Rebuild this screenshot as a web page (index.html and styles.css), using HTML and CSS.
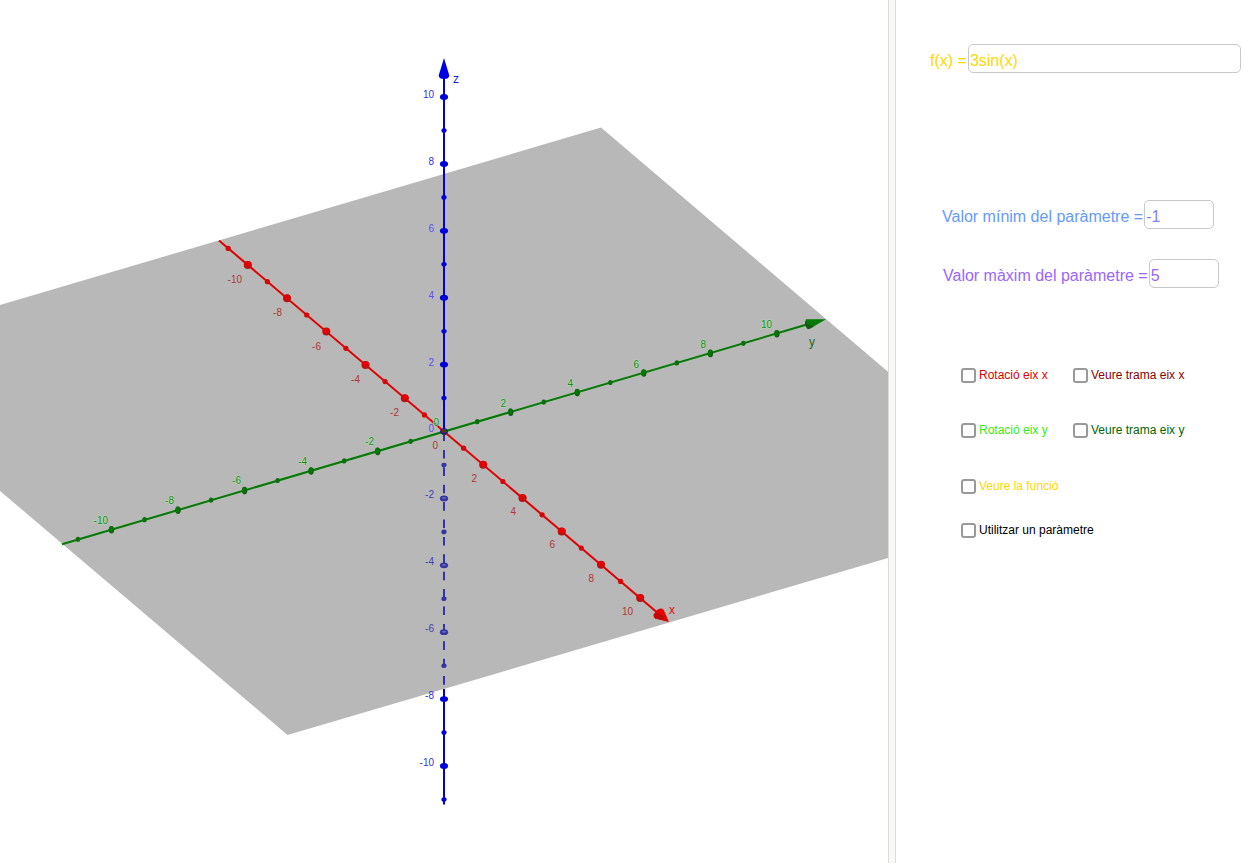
FILE: index.html
```html
<!DOCTYPE html>
<html lang="ca">
<head>
<meta charset="utf-8">
<meta name="viewport" content="width=device-width, initial-scale=1">
<title>Superfícies de revolució</title>
<link rel="stylesheet" href="styles.css">
</head>
<body>
<main class="workspace">
  <section class="view3d" aria-label="Vista 3D">
    <svg class="scene" viewBox="0 0 888 863" preserveAspectRatio="xMidYMid slice" role="img" aria-label="Eixos x, y, z">
      <defs>
        <marker id="x-major" markerUnits="userSpaceOnUse" markerWidth="10" markerHeight="10" refX="5" refY="5">
          <circle cx="5" cy="5" r="4" fill="#b41414"/><path d="M1.2 4.4A4 4 0 0 1 8.6 3.4L9 5.4 6 6.2 3 6.8z" fill="#e60000"/>
        </marker>
        <marker id="x-minor" markerUnits="userSpaceOnUse" markerWidth="8" markerHeight="8" refX="4" refY="4">
          <circle cx="4" cy="4" r="2.6" fill="#d80505"/>
        </marker>
        <marker id="y-major" markerUnits="userSpaceOnUse" markerWidth="10" markerHeight="10" refX="5" refY="5">
          <ellipse cx="5.2" cy="5.3" rx="2.7" ry="3.8" fill="#145a14"/><ellipse cx="4.7" cy="4.7" rx="2" ry="3" fill="#007a00"/>
        </marker>
        <marker id="y-minor" markerUnits="userSpaceOnUse" markerWidth="8" markerHeight="8" refX="4" refY="4">
          <ellipse cx="4" cy="4" rx="2.3" ry="2.6" fill="#0b700b"/>
        </marker>
        <marker id="z-major" markerUnits="userSpaceOnUse" markerWidth="10" markerHeight="10" refX="5" refY="5">
          <ellipse cx="5" cy="5" rx="4.1" ry="2.9" fill="#0000d8"/>
        </marker>
        <marker id="z-minor" markerUnits="userSpaceOnUse" markerWidth="8" markerHeight="8" refX="4" refY="4">
          <ellipse cx="4" cy="4" rx="2.6" ry="2.3" fill="#0000d8"/>
        </marker>
        <marker id="z-major-under" markerUnits="userSpaceOnUse" markerWidth="10" markerHeight="10" refX="5" refY="5">
          <ellipse cx="5" cy="5" rx="4.1" ry="2.9" fill="#3434a4"/><ellipse cx="5" cy="4.6" rx="2" ry="1" fill="#6a6ab8"/>
        </marker>
        <marker id="z-minor-under" markerUnits="userSpaceOnUse" markerWidth="8" markerHeight="8" refX="4" refY="4">
          <ellipse cx="4" cy="4" rx="2.6" ry="2.3" fill="#3434a4"/>
        </marker>
      </defs>

      <polygon class="plane" points="601,127.5 1050.5,510 287.5,735 -162.5,353"/>

      <g class="axis">
        <line x1="444" y1="431.5" x2="444" y2="688" stroke="#3434a4" stroke-dasharray="8.6 8.8" stroke-dashoffset="-1"/>
        <polyline class="marks under-major" points="444,498.4 444,565.3 444,632.2"/>
        <polyline class="marks under-minor" points="444,465 444,531.9 444,598.8 444,665.7"/>
        <line x1="444" y1="689" x2="444" y2="804.5" stroke="#0000d8"/>
        <polyline class="marks z-major" points="444,699.1 444,766"/>
        <polyline class="marks z-minor" points="444,732.6 444,799.5"/>
      </g>

      <g class="axis">
        <line x1="62" y1="544.3" x2="806" y2="324.8" stroke="#007a00"/>
        <polyline class="marks y-major" points="111.3,529.5 177.8,509.9 244.4,490.3 310.9,470.7 377.5,451.1 444,431.5 510.5,411.9 577.1,392.3 643.6,372.7 710.2,353.1 776.7,333.5"/>
        <polyline class="marks y-minor" points="78,539.3 144.6,519.7 211.1,500.1 277.7,480.5 344.2,460.9 410.7,441.3 477.3,421.7 543.8,402.1 610.4,382.5 676.9,362.9 743.4,343.3"/>
        <path d="M826 319.3L806 319.2Q803.5 324 807.5 329.2L811 328z" fill="#007a00"/>
        <path d="M805 321.5Q804.5 326 808.5 329.2L814 326.5 808 324z" fill="#145a14"/>
      </g>

      <g class="axis">
        <line x1="219" y1="240.5" x2="656" y2="611.5" stroke="#e00000"/>
        <polyline class="marks x-major" points="247.8,265 287,298.3 326.3,331.6 365.5,364.9 404.8,398.2 483.2,464.8 522.5,498.1 561.7,531.4 601,564.7 640.2,598"/>
        <polyline class="marks x-minor" points="228.2,248.4 267.4,281.7 306.7,315 345.9,348.3 385.1,381.6 424.4,414.9 463.6,448.2 502.9,481.5 542.1,514.8 581.3,548.1 620.6,581.4"/>
        <path d="M669 622L663.5 609.5Q660.5 607 656 611 652.5 615 655 618.5z" fill="#e60000"/>
        <path d="M653.5 614Q659 612 663 616L667 621 655 618.5Q652.8 616.5 653.5 614z" fill="#c40808"/>
      </g>

      <g class="axis">
        <line x1="444" y1="431" x2="444" y2="74" stroke="#0000d8"/>
        <polyline class="marks z-major" points="444,97 444,163.9 444,230.8 444,297.7 444,364.6"/>
        <polyline class="marks z-minor" points="444,130.5 444,197.4 444,264.3 444,331.2 444,398.1"/>
        <path d="M444 58L449.3 75.5Q449 79 444 79T438.7 75.5z" fill="#0000e6"/>
      </g>
      <ellipse cx="444" cy="431.5" rx="4" ry="3" fill="#1c1c9c"/>
      <circle cx="443.5" cy="431" r="2" fill="#a01414"/>
      <circle cx="445.5" cy="431" r="1.5" fill="#0b600b"/>

      <g class="label z-label">
        <text x="434" y="98">10</text><text x="434" y="165">8</text><text class="over" x="434" y="232">6</text>
        <text class="over" x="434" y="299">4</text><text class="over" x="434" y="366">2</text><text class="over" x="434" y="432">0</text>
        <text class="below" x="434" y="498">-2</text><text class="below" x="434" y="565">-4</text><text class="below" x="434" y="632">-6</text>
        <text x="434" y="699">-8</text><text x="434" y="766">-10</text>
      </g>
      <g class="label x-label">
        <text x="242" y="283">-10</text><text x="282" y="316">-8</text><text x="321" y="350">-6</text><text x="360" y="383">-4</text>
        <text x="399" y="416">-2</text><text x="438" y="449">0</text><text x="477" y="482">2</text><text x="516" y="515">4</text>
        <text x="555" y="548">6</text><text x="594" y="582">8</text><text x="633" y="615">10</text>
      </g>
      <g class="label y-label">
        <text x="108" y="524">-10</text><text x="174" y="504">-8</text><text x="241" y="484">-6</text><text x="307" y="465">-4</text>
        <text x="374" y="445">-2</text><text x="439" y="426">0</text><text x="506" y="407">2</text><text x="573" y="387">4</text>
        <text x="639" y="368">6</text><text x="706" y="348">8</text><text x="772" y="328">10</text>
      </g>
      <g class="name">
        <text x="453" y="83" fill="#1c1ce0">z</text>
        <text x="669" y="614" fill="#e80808">x</text>
        <text x="809" y="346" fill="#1d6a1d">y</text>
      </g>
    </svg>
  </section>

  <div class="splitter" role="separator" aria-orientation="vertical"></div>

  <form class="panel">
    <div class="field function gold">
      <label for="fx">f(x) =</label><input id="fx" type="text" value="3sin(x)">
    </div>
    <div class="field minimum">
      <label for="min">Valor mínim del paràmetre =</label><input id="min" class="short" type="text" value="-1">
    </div>
    <div class="field maximum">
      <label for="max">Valor màxim del paràmetre =</label><input id="max" class="short" type="text" value="5">
    </div>
    <div class="options">
      <label class="option red"><input type="checkbox">Rotació eix x</label>
      <label class="option maroon"><input type="checkbox">Veure trama eix x</label>
      <label class="option lime"><input type="checkbox">Rotació eix y</label>
      <label class="option green"><input type="checkbox">Veure trama eix y</label>
      <label class="option gold wide"><input type="checkbox">Veure la funció</label>
      <label class="option wide"><input type="checkbox">Utilitzar un paràmetre</label>
    </div>
  </form>
</main>
</body>
</html>
```
FILE: styles.css
```css
* {
  box-sizing: border-box;
}

body {
  margin: 0;
  background: #fff;
  font-family: "Liberation Sans", Arial, sans-serif;
}

.workspace {
  display: grid;
  grid-template-columns: minmax(0, 1fr) 8px 364px;
  min-height: calc(100vh - 2px);
}

.view3d {
  display: flex;
  min-width: 0;
  overflow: hidden;
}

.scene {
  flex: 1;
  width: 100%;
  min-width: 0;
}

.plane {
  fill: #b8b8b8;
}

.axis line {
  stroke-width: 2;
}

.marks {
  fill: none;
  stroke: none;
}

.x-major { marker: url(#x-major); }
.x-minor { marker: url(#x-minor); }
.y-major { marker: url(#y-major); }
.y-minor { marker: url(#y-minor); }
.z-major { marker: url(#z-major); }
.z-minor { marker: url(#z-minor); }
.under-major { marker: url(#z-major-under); }
.under-minor { marker: url(#z-minor-under); }

.label {
  font-size: 10px;
  text-anchor: end;
}

.name {
  font-size: 12px;
}

.z-label { fill: #3b2be0; }
.z-label .over { fill: #5a50f5; }
.z-label .below { fill: #3f3fb4; }
.x-label { fill: #b43434; }

.y-label {
  fill: #1d8a1d;
  stroke: #b4dcb4;
  stroke-width: 1px;
  paint-order: stroke;
}

.splitter {
  border: solid #dcdcdc;
  border-width: 0 1px;
  background: #f8f8f7;
}

.panel {
  display: flex;
  flex-direction: column;
  padding: 44px 19px 20px 34px;
}

.field {
  display: flex;
  align-items: center;
  gap: 1px;
  font-size: 16px;
  line-height: 18px;
}

.field label {
  flex: none;
  padding-top: 5px;
}

.field input {
  flex: 1;
  min-width: 0;
  height: 29px;
  padding: 5px 1px 0;
  border: 1px solid #c8c8c8;
  border-radius: 5px;
  background: #fff;
  color: inherit;
  font: inherit;
}

.field .short {
  flex: none;
  width: 70px;
}

.function {
  margin-bottom: 127px;
}

.minimum {
  margin: 0 0 30px 12px;
  color: #6699ff;
}

.minimum input {
  color: #8080ff;
}

.maximum {
  margin: 0 0 80px 13px;
  color: #9966ff;
}

.options {
  display: grid;
  grid-template-columns: 112px auto;
  grid-template-rows: 55px 56px 44px 15px;
  justify-content: start;
  align-items: start;
  padding-left: 31px;
}

.option {
  display: flex;
  align-items: center;
  gap: 3px;
  font-size: 12px;
  line-height: 15px;
  white-space: nowrap;
  color: #000;
}

.option input {
  appearance: none;
  width: 15px;
  height: 15px;
  margin: 0;
  border: 2px solid #999;
  border-radius: 3px;
  background: #fff;
}

.option input:checked {
  background: #666;
}

.wide { grid-column: 1 / -1; }

.gold { color: #ffd700; }
.red { color: #e00000; }
.maroon { color: #8b0000; }
.lime { color: #33ee11; }
.green { color: #006400; }
```
